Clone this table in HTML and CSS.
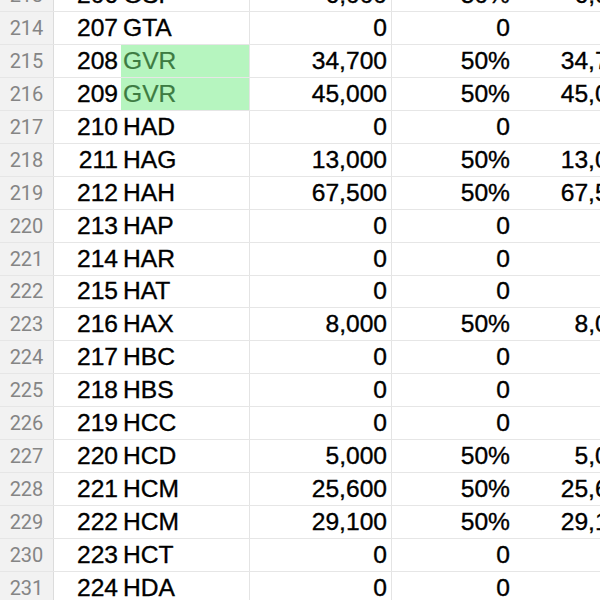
FILE: index.html
```html
<!DOCTYPE html>
<html>
<head>
<meta charset="utf-8">
<link rel="stylesheet" href="styles.css">
</head>
<body>
<div class="sheet">
  <div class="row"><div class="hd">213</div><div class="a">206</div><div class="b">GSP</div><div class="c">6,000</div><div class="d">50%</div><div class="e">6,000</div></div>
  <div class="row"><div class="hd">214</div><div class="a">207</div><div class="b">GTA</div><div class="c">0</div><div class="d">0</div><div class="e"></div></div>
  <div class="row"><div class="hd">215</div><div class="a">208</div><div class="b hl">GVR</div><div class="c">34,700</div><div class="d">50%</div><div class="e">34,700</div></div>
  <div class="row"><div class="hd">216</div><div class="a">209</div><div class="b hl">GVR</div><div class="c">45,000</div><div class="d">50%</div><div class="e">45,000</div></div>
  <div class="row"><div class="hd">217</div><div class="a">210</div><div class="b">HAD</div><div class="c">0</div><div class="d">0</div><div class="e"></div></div>
  <div class="row"><div class="hd">218</div><div class="a">211</div><div class="b">HAG</div><div class="c">13,000</div><div class="d">50%</div><div class="e">13,000</div></div>
  <div class="row"><div class="hd">219</div><div class="a">212</div><div class="b">HAH</div><div class="c">67,500</div><div class="d">50%</div><div class="e">67,500</div></div>
  <div class="row"><div class="hd">220</div><div class="a">213</div><div class="b">HAP</div><div class="c">0</div><div class="d">0</div><div class="e"></div></div>
  <div class="row"><div class="hd">221</div><div class="a">214</div><div class="b">HAR</div><div class="c">0</div><div class="d">0</div><div class="e"></div></div>
  <div class="row"><div class="hd">222</div><div class="a">215</div><div class="b">HAT</div><div class="c">0</div><div class="d">0</div><div class="e"></div></div>
  <div class="row"><div class="hd">223</div><div class="a">216</div><div class="b">HAX</div><div class="c">8,000</div><div class="d">50%</div><div class="e">8,000</div></div>
  <div class="row"><div class="hd">224</div><div class="a">217</div><div class="b">HBC</div><div class="c">0</div><div class="d">0</div><div class="e"></div></div>
  <div class="row"><div class="hd">225</div><div class="a">218</div><div class="b">HBS</div><div class="c">0</div><div class="d">0</div><div class="e"></div></div>
  <div class="row"><div class="hd">226</div><div class="a">219</div><div class="b">HCC</div><div class="c">0</div><div class="d">0</div><div class="e"></div></div>
  <div class="row"><div class="hd">227</div><div class="a">220</div><div class="b">HCD</div><div class="c">5,000</div><div class="d">50%</div><div class="e">5,000</div></div>
  <div class="row"><div class="hd">228</div><div class="a">221</div><div class="b">HCM</div><div class="c">25,600</div><div class="d">50%</div><div class="e">25,600</div></div>
  <div class="row"><div class="hd">229</div><div class="a">222</div><div class="b">HCM</div><div class="c">29,100</div><div class="d">50%</div><div class="e">29,100</div></div>
  <div class="row"><div class="hd">230</div><div class="a">223</div><div class="b">HCT</div><div class="c">0</div><div class="d">0</div><div class="e"></div></div>
  <div class="row"><div class="hd">231</div><div class="a">224</div><div class="b">HDA</div><div class="c">0</div><div class="d">0</div><div class="e"></div></div>
</div>
</body>
</html>
```

FILE: styles.css
```css
html, body {
  margin: 0;
  padding: 0;
  background: #fff;
  overflow: hidden;
}
.sheet {
  margin-top: -20.8px;
  width: 700px;
  font-family: "Liberation Sans", Arial, sans-serif;
  font-size: 24.6px;
  color: #000;
  -webkit-text-stroke: 0.35px currentColor;
}
.row {
  display: grid;
  grid-template-columns: 54px 66px 130px 142px 122px 126px 60px;
  height: 32.93px;
  box-sizing: border-box;
  border-bottom: 1px solid #e6e6e6;
}
.row > div {
  display: flex;
  align-items: center;
  white-space: nowrap;
  overflow: hidden;
}
.hd {
  justify-content: center;
  background: #f2f2f2;
  color: #858585;
  font-family: Roboto, "Liberation Sans", sans-serif;
  font-size: 20px;
  -webkit-text-stroke: 0;
  border-right: 1px solid #dcdcdc;
}
.a {
  justify-content: flex-end;
  padding-right: 2px;
}
.b {
  padding-left: 3px;
  border-right: 1px solid #e4e4e4;
}
.b.hl {
  background: #b6f5bf;
  color: #3d7b42;
  -webkit-text-stroke: 0.2px currentColor;
  margin-left: 1px;
  padding-left: 2px;
}
.c {
  justify-content: flex-end;
  padding-right: 4px;
  border-right: 1px solid #e4e4e4;
}
.d {
  justify-content: flex-end;
  padding-right: 4px;
}
.e {
  justify-content: flex-end;
  padding-right: 4px;
  overflow: visible;
}
```
